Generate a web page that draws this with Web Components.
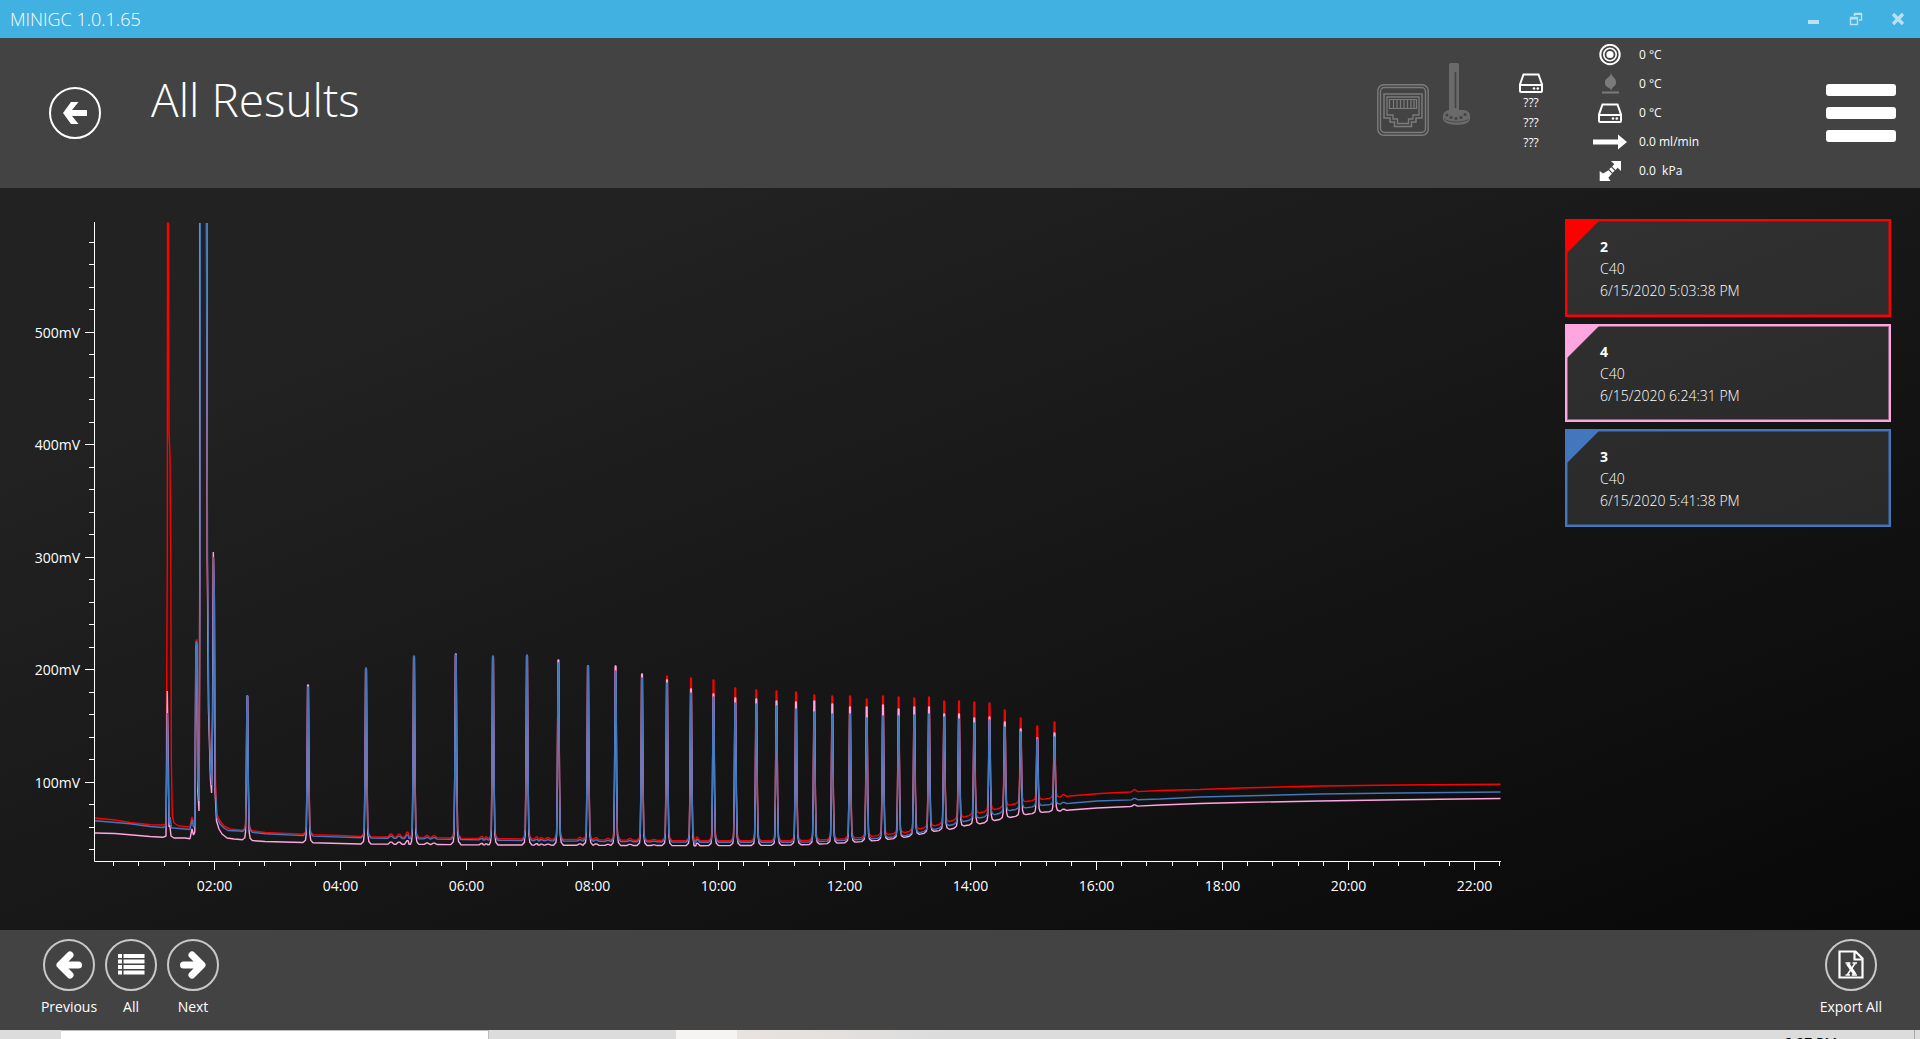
<!DOCTYPE html>
<html lang="en">
<head>
<meta charset="utf-8">
<title>MINIGC 1.0.1.65</title>
<style>
  html, body { margin: 0; height: 100%; }
  body { font-family: "Open Sans", "Noto Sans", sans-serif; font-size: 14px; color: #fff; background: #222; overflow: hidden; }
</style>
</head>
<body>
<gc-app></gc-app>

<script>
const define = (name, html, setup) => {
  const template = document.createElement('template');
  template.innerHTML = html;
  customElements.define(name, class extends HTMLElement {
    constructor() {
      super();
      this.attachShadow({ mode: 'open' }).append(template.content.cloneNode(true));
    }
    connectedCallback() { if (setup) setup(this, this.shadowRoot); }
  });
};

/* Icons: [width, height, markup] */
const disk = `<path d="M5.500 1.500h15l3.500 10v6.500a1 1 0 0 1-1 1h-20a1 1 0 0 1-1-1v-6.500z M2.500 12h21" fill="none" stroke="#fff" stroke-width="2"/><circle cx="16" cy="15.500" r="1.300" fill="#fff"/><circle cx="19.800" cy="15.500" r="1.300" fill="#fff"/>`;
const ICONS = {
  back: [52, 52, `<circle cx="26" cy="26" r="25" fill="none" stroke="#fff" stroke-width="2"/><path fill="#fff" d="M14 26l8-11h7.500l-6.500 8h15v6h-15l6.500 8h-7.500z"/>`],
  prev: [52, 52, `<circle cx="26" cy="26" r="25" fill="none" stroke="#c8c8c8" stroke-width="2"/><path d="M35.500 26H18M27 16L17 26l10 10" fill="none" stroke="#fff" stroke-width="7" stroke-linecap="round" stroke-linejoin="round"/>`],
  next: [52, 52, `<circle cx="26" cy="26" r="25" fill="none" stroke="#c8c8c8" stroke-width="2"/><path d="M16.500 26H34M25 16l10 10-10 10" fill="none" stroke="#fff" stroke-width="7" stroke-linecap="round" stroke-linejoin="round"/>`],
  list: [52, 52, `<circle cx="26" cy="26" r="25" fill="none" stroke="#c8c8c8" stroke-width="2"/><path fill="#fff" d="M13 15h4v4h-4zM18.500 15h21v4h-21zM13 20.500h4v4h-4zM18.500 20.500h21v4h-21zM13 26h4v4h-4zM18.500 26h21v4h-21zM13 31.500h4v4h-4zM18.500 31.500h21v4h-21z"/>`],
  sheet: [52, 52, `<circle cx="26" cy="26" r="25" fill="none" stroke="#c8c8c8" stroke-width="2"/><path d="M14.500 12.500h16l7 7v19h-23zM29.500 12.500v8h8" fill="none" stroke="#fff" stroke-width="2.200"/><path d="M22.500 24.500l7.500 11" stroke="#fff" stroke-width="3.200"/><path d="M30 24.500l-7.500 11M20.500 24h5M27.500 24h4.500M20.500 36h4.500M26.800 36h5.200" stroke="#fff" stroke-width="1.600"/>`],
  ethernet: [52, 52, `<g fill="none" stroke="#7b7b7b"><rect x=".8" y=".8" width="50.400" height="50.400" rx="6" stroke-width="1.400"/><rect x="3.500" y="3.500" width="45" height="45" rx="4" stroke-width="1.400"/><path d="M7 10h38v24h-6v4h-4.500v4.500h-17V38H13v-4H7z" stroke-width="1.500"/><path d="M10 13h32v18h-6v4h-4.500v4.500h-11V35H16v-4h-6z" stroke-width="1.300"/><path d="M12.500 15.500h27v9h-27zM16.500 15v10M20 15v10M23.500 15v10M27 15v10M30.500 15v10M34 15v10M37 15v10" stroke-width="1.200"/></g>`],
  probe: [27, 62, `<g fill="#6a6a6a"><rect x="6" y="0" width="10" height="50" rx="2"/><path d="M0 53c0-4 4-6 7-6h13c4 0 7 2 7 6v3c0 3-5 6-13 6S0 59 0 56z"/></g><path d="M12.500 9v36" stroke="#434343" stroke-width="1.500"/><g fill="#434343"><circle cx="4" cy="52" r="1.500"/><circle cx="8" cy="54.500" r="1.500"/><circle cx="13" cy="55.500" r="1.500"/><circle cx="18" cy="54.500" r="1.500"/><circle cx="22" cy="51.500" r="1.500"/></g><path d="M1 56c5 4 20 4 25 0" fill="none" stroke="#434343" stroke-width=".8"/>`],
  disk: [26, 20, disk],
  target: [34, 22, `<circle cx="17" cy="10.500" r="9.700" fill="none" stroke="#fff" stroke-width="2"/><circle cx="17" cy="10.500" r="6.200" fill="none" stroke="#fff" stroke-width="1.600"/><circle cx="17" cy="10.500" r="3.600" fill="#fff"/>`],
  flame: [34, 22, `<path fill="#7b7b7b" d="M18 0c.8 4 5.500 5 5 10-.3 3.500-4.500 4-4.500 7.500-1-1.500-1.500-2-2.500-2.500-3-1.500-4.500-3-4-6.500C12.500 5 18 4 18 0zM9 18.500h17v2H9z"/>`],
  oven: [34, 22, `<g transform="translate(4 1)">${disk}</g>`],
  flow: [34, 22, `<path fill="#fff" d="M0 8.500h25V3.500l9 7.500-9 7.500v-5H0z"/>`],
  pressure: [34, 22, `<path fill="#fff" d="M18 1h10v10l-3.300-3.300-2.200 2.200-3.400-3.400 2.200-2.200zM18.200 7.300l3.400 3.400-2 2-3.400-3.400zM15.600 10.300l3.400 3.400-3.700 4 2.300 3.300H6.700V11l3.300 2.600z"/>`],
  minimize: [14, 14, `<path fill="#b9e0f4" d="M1 8h11v4H1z"/>`],
  restore: [14, 14, `<path d="M5.500 4V1.500h7v6.500H10M1.500 5.500h7v7h-7z" fill="none" stroke="#b9e0f4" stroke-width="1.400"/><path fill="#b9e0f4" d="M1 5h8v2.500H1zM5 1h8v2H5z"/>`],
  close: [14, 14, `<path d="M2 2l10 10M12 2L2 12" stroke="#b9e0f4" stroke-width="3.400"/>`],
  menu: [70, 59, `<g fill="#fff"><rect width="70" height="12" rx="3"/><rect y="23" width="70" height="12" rx="3"/><rect y="46" width="70" height="12" rx="3"/></g>`]
};

define('gc-icon', `<style>:host{display:block;flex:none} svg{display:block}</style><div></div>`, (host, root) => {
  const [w, h, body] = ICONS[host.getAttribute('name')];
  root.querySelector('div').innerHTML = `<svg width="${w}" height="${h}" viewBox="0 0 ${w} ${h}" aria-hidden="true">${body}</svg>`;
});

define('title-bar', `
<style>
  :host { display: flex; align-items: center; height: 38px; padding: 0 1px 0 10px; background: #41b1e1; font-size: 18px; font-weight: 300; }
  span { flex: 1; }
  button { width: 42px; height: 38px; padding: 0; border: 0; background: none; display: grid; place-items: center; }
</style>
<span><slot></slot></span>
<button aria-label="Minimize"><gc-icon name="minimize"></gc-icon></button>
<button aria-label="Restore"><gc-icon name="restore"></gc-icon></button>
<button aria-label="Close"><gc-icon name="close"></gc-icon></button>`);

define('status-readout', `
<style>
  :host { display: flex; align-items: center; gap: 12px; height: 29px; font-size: 12px; white-space: pre; }
</style><div></div><span><slot></slot></span>`, (host, root) => {
  root.querySelector('div').innerHTML = `<gc-icon name="${host.getAttribute('icon')}"></gc-icon>`;
});

define('page-header', `
<style>
  :host { display: flex; align-items: flex-start; height: 150px; padding: 0 24px 0 49px; background: #434343; box-sizing: border-box; }
  button { padding: 0; border: 0; background: none; color: inherit; }
  .back { margin: 49px 50px 0 0; }
  h1 { flex: 1; margin: 31px 0 0; font-size: 46px; line-height: 60px; font-weight: 300; white-space: nowrap; }
  .net { margin-top: 46px; }
  .probe { margin: 25px 0 0 14px; }
  .unit { display: flex; flex-direction: column; align-items: center; width: 38px; margin: 35px 0 0 42px; font-size: 12px; line-height: 20px; }
  .readouts { width: 187px; margin: 2px 46px 0 43px; }
  .menu { margin-top: 46px; }
</style>
<button class="back" aria-label="Back"><gc-icon name="back"></gc-icon></button>
<h1><slot></slot></h1>
<gc-icon class="net" name="ethernet"></gc-icon>
<gc-icon class="probe" name="probe"></gc-icon>
<div class="unit"><gc-icon name="disk"></gc-icon><span>???</span><span>???</span><span>???</span></div>
<div class="readouts">
  <status-readout icon="target">0 °C</status-readout>
  <status-readout icon="flame">0 °C</status-readout>
  <status-readout icon="oven">0 °C</status-readout>
  <status-readout icon="flow">0.0 ml/min</status-readout>
  <status-readout icon="pressure">0.0  kPa</status-readout>
</div>
<button class="menu" aria-label="Menu"><gc-icon name="menu"></gc-icon></button>`);

define('result-card', `
<style>
  :host { display: block; position: relative; box-sizing: border-box; height: 98px; padding: 15px 33px 0; border: 2px solid var(--trace);
    background: rgba(255,255,255,.1); line-height: 22px; font-weight: 300; }
  :host::before { content: ""; position: absolute; left: 0; top: 0; width: 32px; height: 32px; background: var(--trace); clip-path: polygon(0 0, 100% 0, 0 100%); }
  :host::after { content: ""; position: absolute; inset: 0; border: 1px solid var(--trace); opacity: .45; }
  ::slotted(*) { display: block; }
  ::slotted(b) { font-weight: 700; }
</style>
<slot></slot>`);

define('round-button', `
<style>
  :host { display: block; }
  button { display: flex; flex-direction: column; align-items: center; gap: 6px; min-width: 62px; padding: 0; border: 0; background: none;
    color: inherit; font: inherit; line-height: 20px; white-space: nowrap; }
</style>
<button><div></div><span><slot></slot></span></button>`, (host, root) => {
  root.querySelector('div').innerHTML = `<gc-icon name="${host.getAttribute('icon')}"></gc-icon>`;
});

define('tool-bar', `
<style>
  :host { display: flex; align-items: flex-start; justify-content: space-between; height: 100px; box-sizing: border-box; padding: 9px 38px 0; background: #434343; }
  div { display: flex; }
</style>
<div><slot></slot></div><div><slot name="end"></slot></div>`);

define('task-strip', `
<style>
  :host { display: flex; height: 9px; overflow: hidden; background: #dcdcdd; color: #000; font-size: 14px; line-height: 20px; }
  .a { width: 61px; } .b { width: 427px; background: #fff; border: solid #bdbdbd; border-width: 1px 1px 0 0; }
  .c { width: 187px; } .d { width: 61px; background: #f5f4f3; }
  .e { flex: 1; background: linear-gradient(90deg, #e9e3df, #dcdcdd 20%); }
  time { padding: 3px 77px 0 0; } .f { width: 5px; border-left: 1px solid #a8a8a8; }
</style>
<div class="a"></div><div class="b"></div><div class="c"></div><div class="d"></div><div class="e"></div><time>2:27 PM</time><div class="f"></div>`);

/* Chromatogram: traces are kept in plot units, 63 per minute and 1.125 per mV. */
const BASE = {
  red: [95,818, 115,820, 130,822.5, 150,824.7, 190,827, 235,830, 250,830.5, 265,832.5, 310,834.5, 340,835.5, 366,836.7, 410,837.3, 500,838.7, 560,839.3, 640,840.3, 700,840.8, 780,840.8, 810,840.2, 840,839, 866,837, 883,835, 906,832.3, 921,828.5, 936,825.5, 951,821, 966,816.5, 981,812.5, 997,809, 1012,804.5, 1029,801, 1045,799, 1060,797, 1070,796, 1100,793.5, 1130,792, 1160,790.5, 1200,789.5, 1240,788, 1320,786, 1400,785, 1500.5,784.2],
  pink: [95,833, 115,833.5, 150,836.5, 165,837.3, 190,838.7, 228,838.5, 245,840, 265,841.5, 310,842.7, 360,844, 410,844.3, 500,845, 560,845.2, 640,845.5, 700,845.7, 780,845.3, 810,844.5, 850,842.5, 883,840, 906,837, 936,831, 951,829, 966,825.5, 981,823.5, 997,820, 1012,817, 1029,814, 1045,812, 1060,811, 1070,810, 1097,808, 1130,806.5, 1160,805, 1200,803.5, 1240,802.5, 1320,801, 1400,799.7, 1500.5,798.5],
  blue: [95,820.7, 130,823.8, 150,826.5, 165,827.7, 190,829.5, 228,831, 250,832, 265,833.8, 310,836, 366,838, 410,838.6, 500,840.3, 560,841, 640,841.8, 700,842.2, 780,842.3, 810,842, 850,840, 883,838, 906,835.5, 936,829, 966,821, 997,814, 1012,810, 1045,805, 1060,804, 1070,803.3, 1097,801, 1160,799, 1200,797, 1240,796, 1320,794, 1400,793, 1500.5,792]
};
/* x, then the apex of the red, pink and blue trace */
const PEAKS = [
  [247.3,697,696,696],[308,687,685,687],[366,670,669,668],[414,658,657,656],[455.8,656,654,655],[493,658,657,656],[527,657,656,655],
  [558.4,663,660,663],[588,667,666,666],[615.6,668,666,671],[642,676,674,678],[667,676,680,683],[691,678,689,693],[713.5,680,694,697],
  [735.3,688,698,703],[756.3,690,699,704],[776.5,691,701,706],[796,692,702,709],[814.3,695,701,712],[832.3,696,704,714],[850,696,707,714],
  [866.7,699,707,718],[883,696,705,716],[898.6,697,709,716],[914.3,698,707,715],[929,697,707,714],[944.2,701,714,717],[959,701,714,719],
  [974.3,702,718,723],[989.5,703,717,720],[1004.8,710,722,727],[1020.7,718,729,732],[1037.3,726,738,739],[1054.5,722,733,737]
];
/* x, rise: small bumps shared by all traces */
const BUMPS = [[391,3],[399,3],[407.500,5],[418,1.500],[427,2],[434,2],[460,2],[482,2],[486,1.500],[524.500,7],[537,2],[541,1.500],[548,1.500],[580,2],
  [584,2],[596,2],[608,1.500],[619,3],[630,1.500],[654,1],[697,3.500],[1063.500,2],[1134.500,2]];
/* Solvent front, from 163 to 246 */
const CEILING = 223;
const FRONT = {
  red: [163,825, 166,824, 167.3,560, 167.5,223, 168.5,223, 169,433, 170,455, 170.8,560, 171.3,760, 172.3,815, 174,823, 179,826, 185,826.5, 190,827, 192,817, 193.5,824, 195,815, 196.2,640, 197,640, 198,780, 199.3,796, 200,560, 200.3,223, 206.3,223, 207.3,560, 208.7,700, 210.5,770, 211.8,782, 212.8,700, 213.5,558, 214.5,600, 215.5,780, 217,815, 220,821, 224,826, 230,829, 240,830],
  pink: [163,837.3, 166,836, 167.3,691, 168.3,760, 169,827, 169.8,825, 171,836, 174,838, 185,838, 190,838.7, 192,829, 193.5,835, 194.8,832, 195.8,646, 196.8,644, 197.7,790, 199,811, 199.800,560, 200,223, 206.800,223, 207.3,560, 208.5,710, 210.500,780, 211.6,793, 212.5,720, 213.3,552, 214.3,600, 215,790, 216.5,821, 219,829, 222,834, 227,838, 234,839, 240,839.500],
  blue: [163,827.5, 166,826, 167.5,713, 168.4,790, 169.3,823, 170.2,817, 171.5,828, 174,828, 190,829.5, 192,820, 193.5,827, 194.8,825, 195.9,642, 196.9,642, 197.8,780, 199.2,801, 200,560, 200.3,223, 206.5,223, 207.5,560, 208.8,710, 210.5,770, 211.8,785, 212.8,700, 213.6,557, 214.4,600, 215.2,785, 217,818, 220,824, 224,828, 228,830.5, 240,831]
};

define('gc-chart', `
<style>
  :host { display: block; flex: 1; min-width: 0; }
  svg { display: block; width: 100%; height: auto; font-size: 14px; fill: #fff; }
  path { fill: none; stroke-linejoin: bevel; }
</style>
<svg viewBox="0 188 1565 742" role="img" aria-label="Chromatogram"></svg>`, (host, root) => {
  const svg = root.querySelector('svg');
  const yOf = mv => 894.9 - 1.125 * mv, xOf = min => 88.5 + 63 * min;
  let ticks = 'M94.5 222V861.5H1501', labels = '';
  for (let mv = 40; mv <= 580; mv += 20) {
    const y = Math.floor(yOf(mv)) + .5, major = mv % 100 === 0;
    ticks += `M${major ? 85 : 89} ${y}H94`;
    if (major) labels += `<text x="80" y="${y + 5.5}" text-anchor="end">${mv}mV</text>`;
  }
  for (let k = 1; k <= 56; k++) {
    const x = Math.floor(xOf(k * .4) + .01) + .5, major = k % 5 === 0;
    ticks += `M${x} 861V${major ? 870 : 866}`;
    if (major) labels += `<text x="${x}" y="891" text-anchor="middle">${String(k * 2 / 5).padStart(2, '0')}:00</text>`;
  }
  const traces = [['red', 1, '#ff0000'], ['pink', 2, '#ffa6e0'], ['blue', 3, '#4276bd']].map(([name, col, stroke]) => {
    const b = BASE[name];
    const base = x => {
      for (let i = 2; i < b.length; i += 2) if (x <= b[i]) {
        return b[i - 1] + (b[i + 1] - b[i - 1]) * (x - b[i - 2]) / (b[i] - b[i - 2]);
      }
      return b[b.length - 1];
    };
    const pts = [];
    for (let i = 0; i < b.length; i += 2) if (b[i] < 163 || b[i] > 241) pts.push([b[i], b[i + 1]]);
    for (let i = 0; i < FRONT[name].length; i += 2) pts.push([FRONT[name][i], FRONT[name][i + 1]]);
    const clear = pts.filter(([x]) => !PEAKS.some(p => Math.abs(p[0] - x) < 5));
    for (const p of PEAKS) {
      const x = p[0], top = p[col], h = base(x) - top;
      for (const [dx, k] of [[-5, 0], [-2.5, .015], [-1.7, .06], [-1.1, .35], [-.4, 1], [.4, 1], [1.1, .35], [1.8, .06], [2.8, .015], [5, 0]]) {
        clear.push([x + dx, k === 1 ? top : base(x + dx) - h * k]);
      }
    }
    for (const [x, rise] of BUMPS) {
      const r = rise * (name === 'red' ? 1 : .7);
      if (PEAKS.some(p => Math.abs(p[0] - x) < 5)) { clear.push([x, base(x) - r]); continue; }
      clear.push([x - 3, base(x - 3)], [x - .7, base(x) - r], [x + .7, base(x) - r], [x + 3, base(x + 3)]);
    }
    clear.sort((m, n) => m[0] - n[0]);
    /* The detector saturates above the ceiling, so the line is broken there. */
    const d = clear.map(([x, y], i) => {
      const off = i && y === CEILING && clear[i - 1][1] === CEILING && x - clear[i - 1][0] > 2;
      return `${i && !off ? 'L' : 'M'}${x.toFixed(2)} ${y.toFixed(2)}`;
    }).join('');
    return `<path stroke="${stroke}" stroke-width="1.400" d="${d}"/>`;
  }).join('');
  svg.innerHTML = traces + `<path d="${ticks}" stroke="#fff"/>` + labels;
});

define('gc-app', `
<style>
  :host { display: flex; flex-direction: column; height: 100vh; }
  main { flex: 1; min-height: 0; display: flex; overflow: hidden; background: linear-gradient(to bottom right, #222 18%, #080808); }
  aside { display: flex; flex-direction: column; gap: 7px; flex: none; width: 326px; padding: 31px 29px 0 0; }
  task-strip { flex: none; }
</style>
<title-bar>MINIGC 1.0.1.65</title-bar>
<page-header>All Results</page-header>
<main>
  <gc-chart></gc-chart>
  <aside>
    <result-card style="--trace:#ff0000"><b>2</b><span>C40</span><span>6/15/2020 5:03:38 PM</span></result-card>
    <result-card style="--trace:#ffa6e0"><b>4</b><span>C40</span><span>6/15/2020 6:24:31 PM</span></result-card>
    <result-card style="--trace:#4276bd"><b>3</b><span>C40</span><span>6/15/2020 5:41:38 PM</span></result-card>
  </aside>
</main>
<tool-bar>
  <round-button icon="prev">Previous</round-button>
  <round-button icon="list">All</round-button>
  <round-button icon="next">Next</round-button>
  <round-button slot="end" icon="sheet">Export All</round-button>
</tool-bar>
<task-strip></task-strip>`);
</script>
</body>
</html>
